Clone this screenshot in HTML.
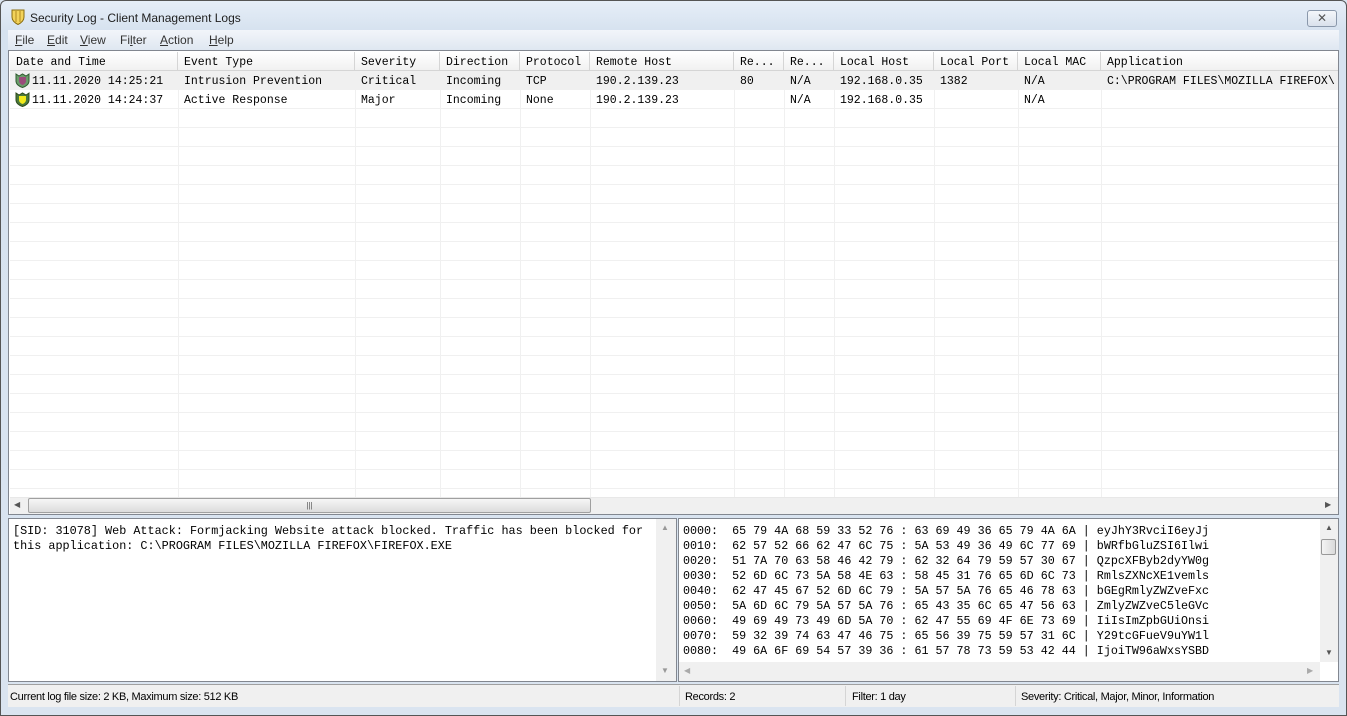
<!DOCTYPE html>
<html><head><meta charset="utf-8"><style>
*{margin:0;padding:0;box-sizing:border-box}
body{width:1347px;height:716px;overflow:hidden;background:#dae4f0;position:relative;font-family:"Liberation Sans",sans-serif}
.abs{position:absolute}
.mono{font-family:"Liberation Mono",monospace;font-size:11.5px;color:#000;white-space:pre}
.frame{left:0;top:0;width:1347px;height:716px;border:1px solid #555;border-radius:6px 6px 0 0;background:linear-gradient(#e6eef8,#d6e2ef 30px,#dae4f0)}
.hdr{top:52px;height:19px;background:linear-gradient(#fff,#f1f1f1);border-right:1px solid #d5d5d5;border-bottom:1px solid #d5d5d5;padding:4px 0 0 6px}
.vl{width:1px;background:#f0f0f0;top:71px;height:426px}
.hl{height:1px;background:#f0f0f0;left:10px;width:1328px}
.sb{font-size:11px;color:#000;top:691px;letter-spacing:-0.3px}
.mi{top:33px;font-size:12px;color:#333}
</style></head><body>
<div class="abs frame"></div>
<svg class="abs" style="left:11px;top:9px" width="14" height="16" viewBox="0 0 14 16"><path d="M1 1h12v7c0 4-3 6-6 7.5C4 14 1 12 1 8z" fill="#f3d35a" stroke="#8a6d10"/><path d="M5 2v11M9 2v11" stroke="#b08a20"/></svg>
<div class="abs" style="left:30px;top:11px;font-size:12px;color:#1e1e1e">Security Log - Client Management Logs</div>
<div class="abs" style="left:1307px;top:10px;width:30px;height:17px;border:1px solid #8a98ab;border-radius:3px;background:linear-gradient(#f4f7fb,#d9e1ec);text-align:center;font-size:12px;line-height:14px;color:#555">✕</div>
<div class="abs" style="left:8px;top:30px;width:1331px;height:20px;background:linear-gradient(#f2f5fa,#dfe7f1)"></div>
<div class="abs mi" style="left:15px"><u>F</u>ile</div>
<div class="abs mi" style="left:47px"><u>E</u>dit</div>
<div class="abs mi" style="left:80px"><u>V</u>iew</div>
<div class="abs mi" style="left:120px">Fi<u>l</u>ter</div>
<div class="abs mi" style="left:160px"><u>A</u>ction</div>
<div class="abs mi" style="left:209px"><u>H</u>elp</div>
<div class="abs" style="left:8px;top:50px;width:1331px;height:465px;border:1px solid #828790;background:#fff"></div>
<div class="abs" style="left:10px;top:71px;width:1328px;height:19px;background:#f0f0f0"></div>
<div class="abs mono hdr" style="left:10px;width:168px">Date and Time</div>
<div class="abs mono hdr" style="left:178px;width:177px">Event Type</div>
<div class="abs mono hdr" style="left:355px;width:85px">Severity</div>
<div class="abs mono hdr" style="left:440px;width:80px">Direction</div>
<div class="abs mono hdr" style="left:520px;width:70px">Protocol</div>
<div class="abs mono hdr" style="left:590px;width:144px">Remote Host</div>
<div class="abs mono hdr" style="left:734px;width:50px">Re...</div>
<div class="abs mono hdr" style="left:784px;width:50px">Re...</div>
<div class="abs mono hdr" style="left:834px;width:100px">Local Host</div>
<div class="abs mono hdr" style="left:934px;width:84px">Local Port</div>
<div class="abs mono hdr" style="left:1018px;width:83px">Local MAC</div>
<div class="abs mono hdr" style="left:1101px;width:237px;border-right:none">Application</div>
<div class="abs vl" style="left:178px"></div><div class="abs vl" style="left:355px"></div><div class="abs vl" style="left:440px"></div><div class="abs vl" style="left:520px"></div><div class="abs vl" style="left:590px"></div><div class="abs vl" style="left:734px"></div><div class="abs vl" style="left:784px"></div><div class="abs vl" style="left:834px"></div><div class="abs vl" style="left:934px"></div><div class="abs vl" style="left:1018px"></div><div class="abs vl" style="left:1101px"></div>
<div class="abs hl" style="top:108px"></div><div class="abs hl" style="top:127px"></div><div class="abs hl" style="top:146px"></div><div class="abs hl" style="top:165px"></div><div class="abs hl" style="top:184px"></div><div class="abs hl" style="top:203px"></div><div class="abs hl" style="top:222px"></div><div class="abs hl" style="top:241px"></div><div class="abs hl" style="top:260px"></div><div class="abs hl" style="top:279px"></div><div class="abs hl" style="top:298px"></div><div class="abs hl" style="top:317px"></div><div class="abs hl" style="top:336px"></div><div class="abs hl" style="top:355px"></div><div class="abs hl" style="top:374px"></div><div class="abs hl" style="top:393px"></div><div class="abs hl" style="top:412px"></div><div class="abs hl" style="top:431px"></div><div class="abs hl" style="top:450px"></div><div class="abs hl" style="top:469px"></div><div class="abs hl" style="top:488px"></div>
<svg class="abs" style="left:15px;top:73px" width="15" height="15" viewBox="0 0 15 15"><path d="M1 1l3 2 3.5-2 3.5 2 3-2v7c0 3-3 5.5-6.5 6.5C4 13.5 1 11 1 8z" fill="#6a9c6a" stroke="#2e5a2e"/><path d="M4 4h7v4c0 2-2 3.5-3.5 4C6 11.5 4 10 4 8z" fill="#9a4a7a"/></svg>
<svg class="abs" style="left:15px;top:92px" width="15" height="15" viewBox="0 0 15 15"><path d="M1 1l3 2 3.5-2 3.5 2 3-2v7c0 3-3 5.5-6.5 6.5C4 13.5 1 11 1 8z" fill="#4a7a3a" stroke="#2e4a1e"/><path d="M4 4h7v4c0 2-2 3.5-3.5 4C6 11.5 4 10 4 8z" fill="#f2ea1a"/></svg>
<div class="abs mono" style="left:32px;top:75px">11.11.2020 14:25:21</div>
<div class="abs mono" style="left:184px;top:75px">Intrusion Prevention</div>
<div class="abs mono" style="left:361px;top:75px">Critical</div>
<div class="abs mono" style="left:446px;top:75px">Incoming</div>
<div class="abs mono" style="left:526px;top:75px">TCP</div>
<div class="abs mono" style="left:596px;top:75px">190.2.139.23</div>
<div class="abs mono" style="left:740px;top:75px">80</div>
<div class="abs mono" style="left:790px;top:75px">N/A</div>
<div class="abs mono" style="left:840px;top:75px">192.168.0.35</div>
<div class="abs mono" style="left:940px;top:75px">1382</div>
<div class="abs mono" style="left:1024px;top:75px">N/A</div>
<div class="abs mono" style="left:1107px;top:75px;width:231px;overflow:hidden">C:\PROGRAM FILES\MOZILLA FIREFOX\</div>
<div class="abs mono" style="left:32px;top:94px">11.11.2020 14:24:37</div>
<div class="abs mono" style="left:184px;top:94px">Active Response</div>
<div class="abs mono" style="left:361px;top:94px">Major</div>
<div class="abs mono" style="left:446px;top:94px">Incoming</div>
<div class="abs mono" style="left:526px;top:94px">None</div>
<div class="abs mono" style="left:596px;top:94px">190.2.139.23</div>
<div class="abs mono" style="left:790px;top:94px">N/A</div>
<div class="abs mono" style="left:840px;top:94px">192.168.0.35</div>
<div class="abs mono" style="left:1024px;top:94px">N/A</div>
<div class="abs" style="left:10px;top:497px;width:1328px;height:17px;background:#f0f0f0;border-top:1px solid #e8e8e8"></div>
<div class="abs" style="left:14px;top:500px;font-size:8px;color:#555">◀</div>
<div class="abs" style="left:1325px;top:500px;font-size:8px;color:#555">▶</div>
<div class="abs" style="left:28px;top:498px;width:563px;height:15px;border:1px solid #a0a0a0;border-radius:2px;background:linear-gradient(#f6f6f6,#dcdcdc);text-align:center;font-size:8px;line-height:13px;color:#555">|||</div>
<div class="abs" style="left:8px;top:518px;width:669px;height:164px;border:1px solid #828790;background:#fff"></div>
<div class="abs" style="left:656px;top:519px;width:20px;height:162px;background:#f0f0f0"></div>
<div class="abs" style="left:661px;top:523px;font-size:8px;color:#999">▲</div>
<div class="abs" style="left:661px;top:666px;font-size:8px;color:#999">▼</div>
<div class="abs mono" style="left:13px;top:524px;line-height:15px;font-size:11.8px">[SID: 31078] Web Attack: Formjacking Website attack blocked. Traffic has been blocked for
this application: C:\PROGRAM FILES\MOZILLA FIREFOX\FIREFOX.EXE</div>
<div class="abs" style="left:678px;top:518px;width:661px;height:164px;border:1px solid #828790;background:#fff"></div>
<div class="abs" style="left:1320px;top:519px;width:18px;height:143px;background:#f0f0f0"></div>
<div class="abs" style="left:1325px;top:523px;font-size:8px;color:#555">▲</div>
<div class="abs" style="left:1325px;top:648px;font-size:8px;color:#555">▼</div>
<div class="abs" style="left:1321px;top:539px;width:15px;height:16px;border:1px solid #999;border-radius:2px;background:linear-gradient(90deg,#f4f4f4,#dadada)"></div>
<div class="abs" style="left:679px;top:662px;width:641px;height:19px;background:#f0f0f0"></div>
<div class="abs" style="left:684px;top:666px;font-size:8px;color:#aaa">◀</div>
<div class="abs" style="left:1307px;top:666px;font-size:8px;color:#aaa">▶</div>
<div class="abs mono" style="left:683px;top:524px;line-height:15px;font-size:11.7px">0000:  65 79 4A 68 59 33 52 76 : 63 69 49 36 65 79 4A 6A | eyJhY3RvciI6eyJj
0010:  62 57 52 66 62 47 6C 75 : 5A 53 49 36 49 6C 77 69 | bWRfbGluZSI6Ilwi
0020:  51 7A 70 63 58 46 42 79 : 62 32 64 79 59 57 30 67 | QzpcXFByb2dyYW0g
0030:  52 6D 6C 73 5A 58 4E 63 : 58 45 31 76 65 6D 6C 73 | RmlsZXNcXE1vemls
0040:  62 47 45 67 52 6D 6C 79 : 5A 57 5A 76 65 46 78 63 | bGEgRmlyZWZveFxc
0050:  5A 6D 6C 79 5A 57 5A 76 : 65 43 35 6C 65 47 56 63 | ZmlyZWZveC5leGVc
0060:  49 69 49 73 49 6D 5A 70 : 62 47 55 69 4F 6E 73 69 | IiIsImZpbGUiOnsi
0070:  59 32 39 74 63 47 46 75 : 65 56 39 75 59 57 31 6C | Y29tcGFueV9uYW1l
0080:  49 6A 6F 69 54 57 39 36 : 61 57 78 73 59 53 42 44 | IjoiTW96aWxsYSBD</div>
<div class="abs" style="left:8px;top:684px;width:1331px;height:23px;background:#f0f0f0;border-top:1px solid #a0a0a0"></div>
<div class="abs" style="left:679px;top:686px;width:1px;height:20px;background:#d5d5d5"></div>
<div class="abs" style="left:845px;top:686px;width:1px;height:20px;background:#d5d5d5"></div>
<div class="abs" style="left:1015px;top:686px;width:1px;height:20px;background:#d5d5d5"></div>
<div class="abs sb" style="left:10px">Current log file size: 2 KB, Maximum size: 512 KB</div>
<div class="abs sb" style="left:685px">Records: 2</div>
<div class="abs sb" style="left:852px">Filter: 1 day</div>
<div class="abs sb" style="left:1021px">Severity: Critical, Major, Minor, Information</div>
</body></html>
